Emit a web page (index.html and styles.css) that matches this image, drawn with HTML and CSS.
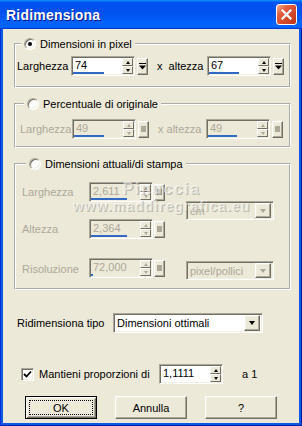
FILE: index.html
```html
<!DOCTYPE html>
<html>
<head>
<meta charset="utf-8">
<link rel="stylesheet" href="styles.css">
</head>
<body>
<div class="window">
  <div class="titlebar">
    <span class="title">Ridimensiona</span>
    <span class="close"><svg width="11" height="11" viewBox="0 0 11 11"><path d="M1.5 1.5 L9.5 9.5 M9.5 1.5 L1.5 9.5" stroke="#fff" stroke-width="2.2" stroke-linecap="square"/></svg></span>
  </div>
  <div class="client">
    <fieldset class="group g1">
      <legend><span class="radio on"></span>Dimensioni in pixel</legend>
      <div class="row">
        <span class="lbl w1">Larghezza</span>
        <span class="field num">
          <span class="fcol"><span class="val">74</span><span class="bar" style="width:31px"></span></span>
          <span class="spin"><span class="sb up"></span><span class="sb dn"></span></span>
        </span>
        <span class="btn3d drop"><svg width="7" height="7" viewBox="0 0 7 7"><rect x="0" y="0" width="7" height="1" fill="#000"/><path d="M0 2.5 H7 L3.5 6.5 Z" fill="#000"/></svg></span>
        <span class="xlbl">x&nbsp; altezza</span>
        <span class="field num">
          <span class="fcol"><span class="val">67</span><span class="bar" style="width:30px"></span></span>
          <span class="spin"><span class="sb up"></span><span class="sb dn"></span></span>
        </span>
        <span class="btn3d drop"><svg width="7" height="7" viewBox="0 0 7 7"><rect x="0" y="0" width="7" height="1" fill="#000"/><path d="M0 2.5 H7 L3.5 6.5 Z" fill="#000"/></svg></span>
      </div>
    </fieldset>

    <fieldset class="group g2 off">
      <legend><span class="radio"></span>Percentuale di originale</legend>
      <div class="row">
        <span class="lbl w2 dis">Larghezza</span>
        <span class="field num gray">
          <span class="fcol"><span class="val">49</span><span class="bar" style="width:30px"></span></span>
          <span class="spin"><span class="sb up"></span><span class="sb dn"></span></span>
        </span>
        <span class="btn3d drop"><span class="sq"></span></span>
        <span class="xlbl x2 dis">x altezza</span>
        <span class="field num gray">
          <span class="fcol"><span class="val">49</span><span class="bar" style="width:29px"></span></span>
          <span class="spin"><span class="sb up"></span><span class="sb dn"></span></span>
        </span>
        <span class="btn3d drop"><span class="sq"></span></span>
      </div>
    </fieldset>

    <fieldset class="group g3 off">
      <legend><span class="radio"></span>Dimensioni attuali/di stampa</legend>
      <div class="grid">
        <span class="lbl dis r1">Larghezza</span>
        <span class="fld r1">
          <span class="field num gray">
            <span class="fcol"><span class="val">2,611</span><span class="bar" style="width:36px"></span></span>
            <span class="spin"><span class="sb up"></span><span class="sb dn"></span></span>
          </span>
          <span class="btn3d drop"><span class="sq"></span></span>
        </span>
        <span class="combo gray cm"><span class="ctext">cm</span><span class="btn3d carrow"><span class="tri"></span></span></span>

        <span class="lbl dis r3">Altezza</span>
        <span class="fld r3">
          <span class="field num gray">
            <span class="fcol"><span class="val">2,364</span><span class="bar" style="width:36px"></span></span>
            <span class="spin"><span class="sb up"></span><span class="sb dn"></span></span>
          </span>
          <span class="btn3d drop"><span class="sq"></span></span>
        </span>

        <span class="lbl dis r5">Risoluzione</span>
        <span class="fld r5">
          <span class="field num gray">
            <span class="fcol"><span class="val">72,000</span><span class="bar" style="width:2px"></span></span>
            <span class="spin"><span class="sb up"></span><span class="sb dn"></span></span>
          </span>
          <span class="btn3d drop"><span class="sq"></span></span>
        </span>
        <span class="combo gray ppi"><span class="ctext">pixel/pollici</span><span class="btn3d carrow"><span class="tri"></span></span></span>
      </div>
    </fieldset>

    <div class="typerow">
      <span class="lbl tlbl">Ridimensiona tipo</span>
      <span class="combo white tipo"><span class="ctext">Dimensioni ottimali</span><span class="btn3d carrow big"><span class="tri"></span></span></span>
    </div>

    <div class="keeprow">
      <span class="check"><svg width="9" height="9" viewBox="0 0 9 9"><path d="M1 4 L3.5 6.5 L8 1.5" stroke="#000" stroke-width="1.8" fill="none"/></svg></span>
      <span class="lbl klbl">Mantieni proporzioni di</span>
      <span class="field num">
        <span class="fcol"><span class="val">1,1111</span></span>
        <span class="spin"><span class="sb up"></span><span class="sb dn"></span></span>
      </span>
      <span class="a1">a 1</span>
    </div>

    <div class="buttons">
      <span class="pbtn default"><span class="focus">OK</span></span>
      <span class="pbtn">Annulla</span>
      <span class="pbtn">?</span>
    </div>

    <div class="watermark">
      <div class="wm1">Pinuccia</div>
      <div class="wm2">www.maddiregrafica.eu</div>
    </div>
  </div>
</div>
</body>
</html>
```
FILE: styles.css
```css
* { box-sizing: border-box; }
html, body { margin: 0; padding: 0; }
body {
  width: 302px; height: 426px; overflow: hidden;
  font-family: "Liberation Sans", Arial, sans-serif;
  font-size: 11px; color: #000; background: #ECE9D8;
}
.window {
  width: 302px; height: 426px;
  display: flex; flex-direction: column;
  background: #0B5AE4;
  box-shadow: inset 1px 0 #0831D9, inset -1px 0 #001EA0, inset 0 -1px #001EA0;
}
.titlebar {
  height: 29px; flex: none;
  display: flex; align-items: center; justify-content: space-between;
  padding: 0 5px 0 6px;
  background: linear-gradient(180deg, #0997ff, #0053ee 8%, #0050ee 40%, #0066ff 88%, #0066ff 93%, #005bff 95%, #003dd7 96%, #003dd7);
}
.title {
  color: #fff; font-weight: bold; font-size: 14px;
  text-shadow: 1px 1px #0F1089; letter-spacing: 0.2px;
}
.close {
  width: 21px; height: 21px;
  border: 1px solid #fff; border-radius: 3px;
  background: linear-gradient(135deg, #F6B49C 0%, #E2603E 30%, #D4482A 65%, #B8361A 100%);
  display: flex; align-items: center; justify-content: center;
}
.client {
  flex: 1; position: relative;
  margin: 0 3px 3px;
  background: #ECE9D8;
  padding: 8px 0 0 11px;
  display: flex; flex-direction: column;
}
.group {
  margin: 0; width: 277px; min-width: 0;
  border: 2px groove #fff;
}
.group legend {
  margin-left: 4px; padding: 0 3px;
  line-height: 14px; height: 14px;
  white-space: nowrap;
}
.radio {
  display: inline-block; vertical-align: -2px;
  width: 12px; height: 12px; margin-right: 4px;
  border-radius: 50%; background: #fff;
  border: 1px solid; border-color: #ACA899 #fff #fff #ACA899;
  box-shadow: inset 1px 1px #716F64, inset -1px -1px #F1EFE2;
}
.radio.on::after {
  content: ""; display: block; width: 4px; height: 4px;
  border-radius: 50%; background: #000; margin: 3px;
}
.g1 { padding: 5px 0 10px 1px; }
.g2 { margin-top: 9px; padding: 8px 0 7px 4px; }
.g3 { margin-top: 9px; padding: 11px 0 8px 6px; }
.row { display: flex; align-items: center; height: 20px; }
.lbl { white-space: nowrap; }
.dis { color: #ACA899; }
.w1 { width: 54px; }
.w2 { width: 52px; }
.xlbl { width: 50px; margin-left: 9px; }
.x2 { margin-left: 9px; width: 48px; }

.field {
  display: flex; height: 20px; width: 64px;
  background: #fff;
  border: 1px solid; border-color: #ACA899 #fff #fff #ACA899;
  box-shadow: inset 1px 1px #716F64, inset -1px -1px #F1EFE2;
  padding: 1px;
}
.field.gray { background: #ECE9D8; color: #ACA899; }
.fcol { flex: 1; display: flex; flex-direction: column; justify-content: space-between; }
.val { line-height: 12px; padding: 1px 0 0 2px; }
.bar { height: 2px; background: #316AC5; }
.spin { width: 11px; display: flex; flex-direction: column; }
.btn3d {
  background: #ECE9D8;
  border: 1px solid; border-color: #fff #716F64 #716F64 #fff;
  box-shadow: inset -1px -1px #ACA899, inset 1px 1px #F1EFE2;
  display: flex; align-items: center; justify-content: center;
}
.sb {
  height: 8px;
  background: #ECE9D8;
  border: 1px solid; border-color: #fff #716F64 #716F64 #fff;
  display: flex; align-items: center; justify-content: center;
}
.sb.up::after {
  content: ""; width: 0; height: 0;
  border-left: 2.5px solid transparent; border-right: 2.5px solid transparent;
  border-bottom: 3px solid #000;
}
.sb.dn::after {
  content: ""; width: 0; height: 0;
  border-left: 2.5px solid transparent; border-right: 2.5px solid transparent;
  border-top: 3px solid #000;
}
.gray .sb.up::after { border-bottom-color: #ACA899; }
.gray .sb.dn::after { border-top-color: #ACA899; }
.drop { width: 11px; height: 17px; margin-left: 2px; }
.sq { width: 5px; height: 6px; background: #ACA899; }

.grid {
  display: grid;
  grid-template-columns: 67px 77px 20px 88px;
  grid-template-rows: 20px 17px 20px 19px 22px;
}
.grid .lbl { align-self: center; grid-column: 1; }
.fld { display: flex; align-items: center; grid-column: 2; align-self: start; }
.fld .drop { margin-left: 1px; }
.r1 { grid-row: 1; }
.r3 { grid-row: 3; }
.r5 { grid-row: 5; }
.cm { grid-column: 4; grid-row: 1 / 4; align-self: center; }
.ppi { grid-column: 4; grid-row: 5; align-self: end; }

.combo {
  display: flex; align-items: center; height: 19px;
  border: 1px solid; border-color: #ACA899 #fff #fff #ACA899;
  box-shadow: inset 1px 1px #716F64, inset -1px -1px #F1EFE2;
  padding: 2px;
}
.combo.gray { background: #ECE9D8; color: #ACA899; width: 88px; }
.combo.white { background: #fff; }
.ctext { flex: 1; padding-left: 1px; white-space: nowrap; }
.carrow { width: 16px; height: 15px; }
.tri {
  width: 0; height: 0;
  border-left: 3.5px solid transparent; border-right: 3.5px solid transparent;
  border-top: 4px solid #ACA899;
}
.white .tri { border-top-color: #000; }
.carrow.big { height: 16px; }

.typerow { display: flex; align-items: center; margin-top: 23px; height: 20px; padding-left: 3px; }
.tlbl { width: 96px; }
.tipo { width: 150px; height: 20px; }

.keeprow { display: flex; align-items: center; margin-top: 31px; height: 20px; padding-left: 7px; }
.check {
  width: 13px; height: 13px; background: #fff;
  border: 1px solid; border-color: #ACA899 #fff #fff #ACA899;
  box-shadow: inset 1px 1px #716F64, inset -1px -1px #F1EFE2;
  display: flex; align-items: center; justify-content: center;
}
.klbl { margin-left: 5px; width: 120px; }
.a1 { margin-left: 19px; }

.buttons { display: flex; gap: 18px; margin-top: 12px; padding-left: 11px; }
.pbtn {
  width: 72px; height: 23px;
  display: flex; align-items: center; justify-content: center;
  background: #ECE9D8;
  border: 1px solid; border-color: #fff #716F64 #716F64 #fff;
  box-shadow: inset -1px -1px #ACA899, inset 1px 1px #F1EFE2;
}
.pbtn.default {
  border: 1px solid #000;
  box-shadow: inset 1px 1px #fff, inset -1px -1px #716F64, inset 2px 2px #F1EFE2, inset -2px -2px #ACA899;
}
.focus {
  width: 64px; height: 15px;
  border: 1px dotted #000;
  display: flex; align-items: center; justify-content: center;
}

.watermark {
  position: absolute; left: 60px; top: 151px; width: 197px;
  text-align: center; font-weight: bold;
  color: rgba(255, 255, 255, 0.55);
  text-shadow: 1px 1px 0 rgba(110, 110, 100, 0.4);
  pointer-events: none;
}
.wm1 { font-size: 16px; line-height: 18px; letter-spacing: 1.5px; }
.wm2 { font-size: 14px; line-height: 17px; letter-spacing: 1px; }
```
